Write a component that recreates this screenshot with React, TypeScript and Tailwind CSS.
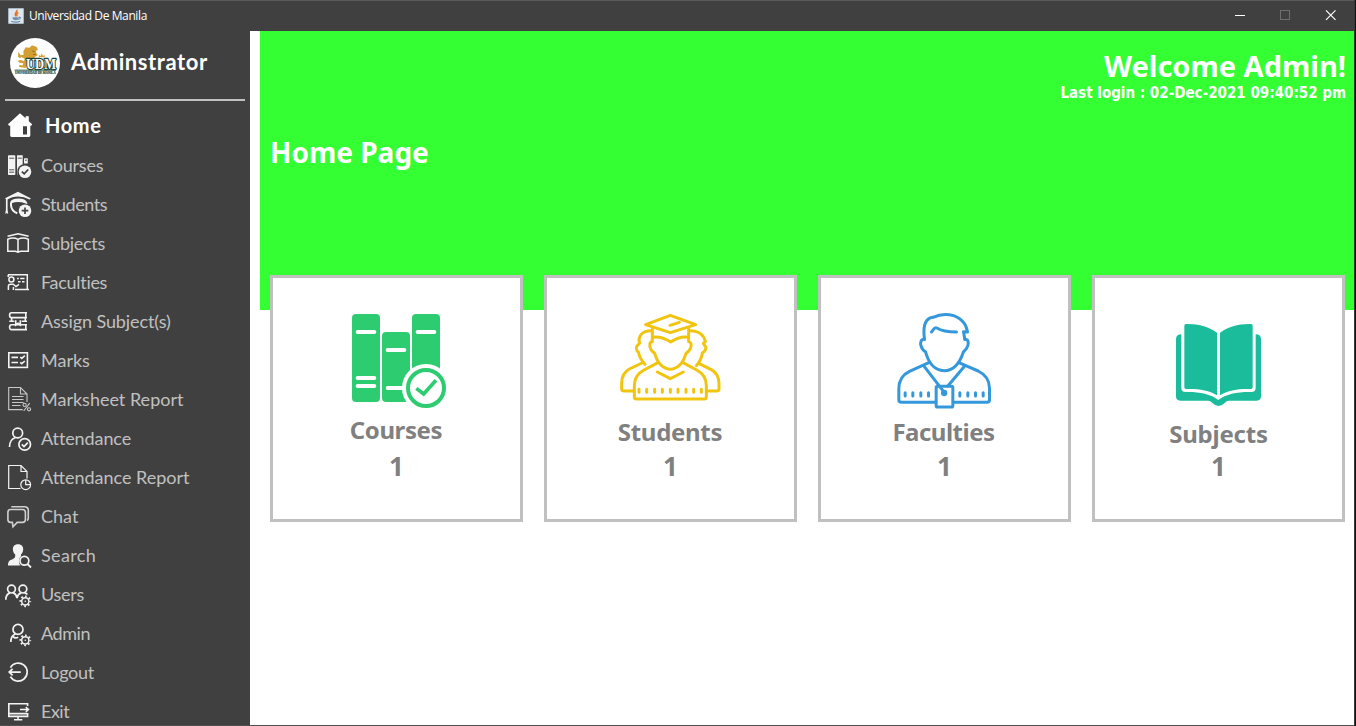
import type { ReactNode } from "react";

function JavaIcon() {
  return (
    <svg width="16" height="16" viewBox="0 0 16 16">
      <rect x="0.3" y="0.3" width="15.4" height="15.4" rx="1" fill="#dfe7ee" stroke="#9db4c6" strokeWidth="0.8" />
      <path d="M8.8 1.8C10 4 5.4 5 7.6 8.4M10.3 4.4C8 5.6 9.4 6.6 8.4 8.4" fill="none" stroke="#e76f1c" strokeWidth="1.5" />
      <path d="M4.4 9.3H10.8C10.6 11.6 9.8 12.2 7.6 12.2S4.9 11.6 4.4 9.3Z" fill="#6b8fb0" />
      <path d="M10.8 9.2C13.6 8.6 13 11 10.3 11.3M3.4 13.4C6 14.4 10 14.4 12.2 13.2" fill="none" stroke="#4f7699" strokeWidth="1" />
    </svg>
  );
}

function SchoolLogo() {
  return (
    <svg className="shrink-0 overflow-visible" width="50" height="50" viewBox="0 0 150 150">
      <circle cx="75" cy="75" r="75" fill="#fff" />
      <path
        d="M40 40L47 28L58 29L66 22L80 27L84 36L78 38L79 46L84 51L76 56L70 62L58 66L52 80L46 90L28 87C24 82 30 78 37 83L40 76L29 74L23 68L31 66L42 69L44 62L34 57L30 61L24 56L25 41L32 52L41 50Z"
        fill="#d2a032"
      />
      <path d="M66 39L74 41M69 49L77 49" fill="none" stroke="#8d6417" strokeWidth="2.5" />
      <path d="M86 58L87 50L92 54L95 46L99 54L104 50V58Z" fill="#d2a032" />
      <text
        x="48" y="93" textLength="90" lengthAdjust="spacingAndGlyphs" fill="#fff" stroke="#1c4536" strokeWidth="7"
        paintOrder="stroke" strokeLinejoin="round" fontSize="46" fontWeight="700" fontFamily="Liberation Serif, serif"
      >
        UDM
      </text>
      <path d="M14 96.5H138" stroke="#24513f" strokeWidth="3" />
      <text
        x="15" y="108" textLength="122" lengthAdjust="spacingAndGlyphs" fill="#1c4536" stroke="#1c4536" strokeWidth="0.6"
        fontSize="12" fontWeight="700" fontFamily="Liberation Serif, serif"
      >
        UNIVERSIDAD DE MANILA
      </text>
    </svg>
  );
}

function Gear() {
  return (
    <g fill="none">
      <circle cx="20.3" cy="20.3" r="3.6" strokeWidth="1.5" />
      <circle cx="20.3" cy="20.3" r="5" strokeWidth="1.8" strokeDasharray="1.7 2.227" strokeDashoffset="0.85" />
      <circle cx="20.3" cy="20.3" r="0.8" fill="#f3f3f3" stroke="none" />
    </g>
  );
}

const homeIcon = (
  <path
    d="M3 12.3L15 1.2L20.6 6.2V4.2H23.8V9.3L27.2 12.3L26.2 13.8H25.3V23.6Q25.3 25 24 25H22V14.3H18V22.5H22V25H6.6Q5.2 25 5.2 23.6V13.8H4Z"
    fill="#fff" stroke="none"
  />
);

type Item = { label: string; text: string; icon: ReactNode };

const items: Item[] = [
  {
    label: "Courses",
    text: "tracking-[-0.2px]",
    icon: (
      <g stroke="none" fill="#f3f3f3">
        <rect x="3" y="3.2" width="7.3" height="19.8" rx="0.8" />
        <path d="M12 3.2H17.7V12.2C14 13.4 12.3 16 12.3 19.5V23H12Z" />
        <rect x="19" y="6.2" width="3.8" height="5.3" rx="0.6" />
        <circle cx="20" cy="19.7" r="6.3" />
        <path d="M4.2 6.2H9.2M4.2 17.8H9.2M4.2 20.2H9.2M12.8 6.2H16.8M20 8.2H21.8" stroke="#404040" strokeWidth="0.9" />
        <path d="M16.9 19.6L19.2 21.8L23.2 17.5" fill="none" stroke="#404040" strokeWidth="1.8" />
      </g>
    ),
  },
  {
    label: "Students",
    text: "tracking-[-0.45px]",
    icon: (
      <g>
        <path d="M0 7.2L13 0.8L26 7.5L24.5 8.6Q19 5.6 13 5.6T2.6 8.6V18.4L3.2 23L1.6 22L0.2 23L0.9 18.4V8Z" fill="#f3f3f3" stroke="none" />
        <path d="M6.3 11.2Q7 8.4 13.5 8.4T21 11.5Q13 8.8 6.3 11.2ZM6 12V14.3Q6.5 20 12.3 22.3" fill="none" strokeWidth="2" />
        <circle cx="20" cy="19.7" r="6.3" fill="#f3f3f3" stroke="none" />
        <path d="M20 16.4V23M16.7 19.7H23.3" stroke="#404040" strokeWidth="1.7" />
      </g>
    ),
  },
  {
    label: "Subjects",
    text: "tracking-[-0.3px]",
    icon: (
      <g fill="none" strokeWidth="1.5">
        <path d="M2.8 9.2Q8.5 6.8 13 9.4Q17.5 6.8 23.3 9.2V21.3H15.5L13 22.3L10.5 21.3H2.8ZM13 9.4V21.3M2.6 6.2L13 3.7L23.6 6.2" />
      </g>
    ),
  },
  {
    label: "Faculties",
    text: "tracking-[-0.3px]",
    icon: (
      <g fill="none" strokeWidth="1.5">
        <path d="M3 5.7H22.3V20.2M3.2 5.7V8M10 20.4H24M12 9.5H13.8M15.2 9.5H19.5M13 12.8H15.5M17 12.8H19.5" />
        <circle cx="6.4" cy="10.6" r="2.5" />
        <path d="M3.4 21V17.2Q3.4 15.2 5.6 15.2H8.2L11 17.6L14 15.3M8.4 18V21" />
      </g>
    ),
  },
  {
    label: "Assign Subject(s)",
    text: "tracking-[-0.1px]",
    icon: (
      <g fill="none" strokeWidth="1.6">
        <path d="M22 4.8H6.5Q4.6 4.8 4.6 7.2T6.5 9.6H22M20.8 4.8V9.6M6.6 9.6V14M20.3 9.6V14M4.3 13.3H9.3M16.7 13.3H22M22 16.8H6.5Q4.6 16.8 4.6 19.2T6.5 21.6H22M20.8 16.8V21.6" />
        <path d="M10.7 12.3V17L13 15.2L15.3 17V12.3" />
      </g>
    ),
  },
  {
    label: "Marks",
    text: "tracking-[0px]",
    icon: (
      <g fill="none" strokeWidth="1.6">
        <rect x="3.8" y="5.8" width="18.6" height="14.6" />
        <path d="M6.5 10.4H13M6.5 15.5H13" />
        <path d="M15.2 10L16.8 11.4L19.8 8.7M15.2 15.3L16.8 16.7L19.8 14" />
      </g>
    ),
  },
  {
    label: "Marksheet Report",
    text: "tracking-[0px]",
    icon: (
      <g fill="none" stroke="#c8c8c8" strokeWidth="1.1">
        <path d="M17.8 23.6H3.7V1.5H15.5L22 8V16M15.5 1.5V8H22M7 10.5H18.5M7 13.5H18.5M7 16.5H18.5M7 19.5H15.5" />
        <path d="M24.7 17.2L18.7 25" />
        <circle cx="19.6" cy="18.9" r="1.6" />
        <circle cx="24" cy="23.3" r="1.6" />
      </g>
    ),
  },
  {
    label: "Attendance",
    text: "tracking-[-0.1px]",
    icon: (
      <g fill="none" strokeWidth="1.7">
        <circle cx="12.7" cy="8" r="4.9" />
        <path d="M4.5 22Q4.5 14.5 10.5 12.5" />
        <circle cx="19.7" cy="19.4" r="5.8" />
        <path d="M16.8 19.3L19 21.5L22.8 17.7" />
      </g>
    ),
  },
  {
    label: "Attendance Report",
    text: "tracking-[0px]",
    icon: (
      <g fill="none" strokeWidth="1.2">
        <path d="M15.5 24.5H3.7V1.5H16L22 7.5V14.5M16 1.5V7.5H22" />
        <circle cx="20.7" cy="20.7" r="4.9" />
        <path d="M20.7 16V20.7H25.3" />
      </g>
    ),
  },
  {
    label: "Chat",
    text: "tracking-[0px]",
    icon: (
      <g fill="none" stroke="#d0d0d0" strokeWidth="1.6">
        <path d="M5.5 6.5H17.5Q20.4 6.5 20.4 9.3V16.6Q20.4 19.4 17.5 19.4H12.2L8 23.8L7.4 19.4H5.5Q2.9 19.4 2.9 16.6V9.3Q2.9 6.5 5.5 6.5Z" />
        <path d="M6.3 3.7H19.5Q23.3 3.7 23.3 7.5V15Q23.3 16.8 22 17.5" />
      </g>
    ),
  },
  {
    label: "Search",
    text: "tracking-[0.35px]",
    icon: (
      <g>
        <path d="M13 2.3C16.5 2.3 18.3 4.5 18.2 7.3C18.1 9.7 17.3 11.3 16 12.5V14.2C13.8 16 13.2 20.5 15.4 23.6H3C3 19.3 4.5 18.3 7.5 17.2C9.8 16.3 10.4 15.6 10.2 12.6C8.7 11.3 7.9 9.6 7.9 7.3C7.8 4.5 9.5 2.3 13 2.3Z" fill="#f3f3f3" stroke="none" />
        <circle cx="19.4" cy="18.7" r="4.4" fill="none" strokeWidth="1.7" />
        <path d="M22.5 22L26 25.5" strokeWidth="1.8" />
      </g>
    ),
  },
  {
    label: "Users",
    text: "tracking-[-0.25px]",
    icon: (
      <g fill="none" strokeWidth="1.7">
        <circle cx="6.5" cy="8.1" r="3.9" />
        <circle cx="17.9" cy="8.1" r="3.9" />
        <path d="M0.8 18.7Q0.8 13.5 4.8 11.9M8.2 11.9Q11.3 13 12 17Q12.8 13 16.2 11.9M19.6 11.9Q21.5 12.4 22.4 13.6" />
        <Gear />
      </g>
    ),
  },
  {
    label: "Admin",
    text: "tracking-[-0.45px]",
    icon: (
      <g fill="none" strokeWidth="1.7">
        <circle cx="13" cy="9.4" r="5" />
        <path d="M5.8 22Q5.8 15.5 10.5 14M8.2 16.6Q10 18.8 13.2 17.2" />
        <Gear />
      </g>
    ),
  },
  {
    label: "Logout",
    text: "tracking-[-0.3px]",
    icon: (
      <g fill="none" strokeWidth="1.7">
        <path d="M5.4 8.6A9 9 0 1 1 5.4 17.6M15.8 13.1H4.2M7.6 9.8L4.2 13.1L7.6 16.4" />
      </g>
    ),
  },
  {
    label: "Exit",
    text: "tracking-[-0.5px]",
    icon: (
      <g fill="none" strokeWidth="1.6">
        <path d="M22.6 8V5.8H3.8V18.4H22.6V15M3.8 15.6H22M13 18V21.2M9 21.8H17.3M15 11.5H23.2M20.8 9.2L23.4 11.5L20.8 13.8" />
      </g>
    ),
  },
];

function MenuIcon({ children }: { children: ReactNode }) {
  return (
    <svg className="shrink-0" width="28" height="28" viewBox="0 0 28 28" stroke="#f3f3f3">
      {children}
    </svg>
  );
}

function Sidebar() {
  return (
    <aside className="flex w-[250px] shrink-0 flex-col overflow-hidden bg-[#404040] font-[Lato,sans-serif]">
      <div className="flex h-[68px] shrink-0 items-start pl-2.5 pt-[7px]">
        <SchoolLogo />
        <span className="ml-[11px] mt-[9px] text-[22px] leading-[30px] font-bold tracking-[0.58px] whitespace-nowrap text-white">
          Adminstrator
        </span>
      </div>
      <div className="mx-[5px] h-0.5 shrink-0 bg-[#c0c0c0]" />
      <nav className="flex flex-col pt-[11px]">
        <div className="flex h-[40px] shrink-0 items-start pl-[5px]">
          <MenuIcon>{homeIcon}</MenuIcon>
          <span className="ml-3 text-[20px] leading-[26px] font-bold tracking-[0.6px] whitespace-nowrap text-white">Home</span>
        </div>
        {items.map((it) => (
          <div key={it.label} className="flex h-[39px] shrink-0 items-start pl-[5px]">
            <MenuIcon>{it.icon}</MenuIcon>
            <span className={"ml-2 text-[18px] leading-[26px] whitespace-nowrap text-[#c0c0c0] " + it.text}>{it.label}</span>
          </div>
        ))}
      </nav>
    </aside>
  );
}

function CoursesArt() {
  return (
    <svg width="101" height="98" viewBox="258 141 303 294" fill="#2ecc71">
      <rect x="276" y="147" width="84" height="264" rx="12" />
      <rect x="366" y="201" width="84" height="210" rx="12" />
      <rect x="456" y="147" width="84" height="240" rx="12" />
      <path d="M293 201H343M293 339H343M293 363H343M383 255H433M383 369H440M473 201H523" stroke="#fff" strokeWidth="12" strokeLinecap="round" />
      <circle cx="498" cy="369" r="72" fill="#fff" />
      <circle cx="498" cy="369" r="54" fill="none" stroke="#2ecc71" strokeWidth="12" />
      <path d="M469 370L491 387L528 346" fill="none" stroke="#2ecc71" strokeWidth="11" />
    </svg>
  );
}

function StudentsArt() {
  return (
    <svg width="104" height="92" viewBox="56 36 312 276" fill="none" stroke="#f1c40f" strokeWidth="9" strokeLinecap="round" strokeLinejoin="round">
      <path d="M136 74L210 46L286 74L210 98Z" />
      <path d="M209 76L237 67" />
      <path d="M156 87V125C147 124 147 137 151 147C154 154 159 156 163 160C169 181 183 205 210 208C237 205 251 181 257 160C262 156 267 153 270 146C275 136 273 127 265 125V87" />
      <path d="M157 112C177 109 192 114 211 126C229 114 246 109 264 112" />
      <path d="M151 92C130 92 117 104 116 121L118 129L110 138C106 144 109 153 115 158C117 173 124 182 134 193M269 92C292 92 311 103 315 125L309 130L317 142C317 151 311 156 306 159C304 176 297 187 288 197" />
      <path d="M173 188L131 210C110 221 102 236 102 257V290Q102 297 109 297H311Q318 297 318 290V257C318 236 310 221 289 210L248 188" />
      <path d="M125 189L87 207C71 216 64 230 64 249V266Q64 273 72 273H98M295 190L333 209C349 218 356 231 356 250V266Q356 273 348 273H322" />
      <path d="M171 216L210 236L249 216" />
      <path d="M116 268V277M139 268V277M163 268V277M186 268V277M210 268V277M233 268V277M257 268V277M280 268V277M303 268V277" />
    </svg>
  );
}

function FacultiesArt() {
  return (
    <svg width="98" height="98" viewBox="62.5 36 294 294" fill="none" stroke="#3498db" strokeWidth="9" strokeLinecap="round" strokeLinejoin="round">
      <path d="M148 118C144 88 145 55 174 52C204 37 244 41 264 66C274 76 275 87 277 96L265 95L269 118" />
      <path d="M148 118C137 117 134 130 138 139C141 148 145 153 151 155C159 186 177 212 207 212C237 212 255 186 265 155C271 151 275 147 278 137C281 126 279 118 269 118" />
      <path d="M169 96C176 88 177 80 185 84C202 95 222 96 244 96" />
      <path d="M161 188L103 214C78 226 71 244 71 266V300Q71 307 79 307H180M251 188L309 213C334 225 343 242 343 265V300Q343 307 335 307H235" />
      <path d="M147 199L205 274M268 199L218 258" />
      <rect x="183" y="259" width="50" height="62" rx="4" />
      <circle cx="207" cy="279" r="5" fill="#3498db" />
      <path d="M90 278V288M113 278V288M137 278V288M160 278V288M254 278V288M278 278V288M301 278V288M324 278V288" />
    </svg>
  );
}

function SubjectsArt() {
  return (
    <svg width="88" height="86" viewBox="72 66 264 258" fill="#1abc9c">
      <path d="M94 103V263Q94 276 107 276C145 275 181 281 205 300C229 281 266 275 304 276Q317 276 317 263V103Q333 103 333 118V289Q333 302 320 302H237Q229 302 224 309Q206 327 187 309Q182 302 174 302H91Q78 302 78 289V118Q78 103 94 103Z" />
      <path d="M103 77Q103 72 108 72C145 71 177 80 201 98V286C176 270 146 266 108 267Q103 267 103 262ZM308 77Q308 72 303 72C266 71 234 80 210 98V286C235 270 265 266 303 267Q308 267 308 262Z" />
    </svg>
  );
}

const cards = [
  { title: "Courses", count: 1, art: <CoursesArt />, gap: "h-[102px]", cls: "tracking-[-0.4px] pr-px" },
  { title: "Students", count: 1, art: <StudentsArt />, gap: "h-[104px]", cls: "tracking-[-0.3px] pr-px" },
  { title: "Faculties", count: 1, art: <FacultiesArt />, gap: "h-[104px]", cls: "tracking-[-0.5px] pr-0.5" },
  { title: "Subjects", count: 1, art: <SubjectsArt />, gap: "h-[106px] pt-2.5", cls: "tracking-[-0.2px]" },
];

function TitleBar() {
  return (
    <header className="flex h-[31px] shrink-0 items-center border-t border-[#5a5a5a] bg-[#404040] pl-2 font-['Open_Sans',sans-serif]">
      <JavaIcon />
      <span className="ml-[5px] grow text-[12px] leading-4 tracking-[-0.39px] text-white">Universidad De Manila</span>
      <svg width="120" height="30" viewBox="1234 1 120 30" fill="none" strokeWidth="1">
        <path d="M1235 15.5H1245" stroke="#fff" />
        <rect x="1280.5" y="10.5" width="9" height="9" stroke="#6e6e6e" />
        <path d="M1326 10.3L1335.5 19.8M1335.5 10.3L1326 19.8" stroke="#fff" strokeWidth="1.2" />
      </svg>
    </header>
  );
}

export default function App() {
  return (
    <div className="flex h-[726px] w-[1356px] overflow-hidden bg-[#111]">
      <div className="flex w-[1354px] flex-col border-b border-[#505050] bg-white">
        <TitleBar />
        <div className="flex min-h-0 grow">
          <Sidebar />
          <main className="ml-2.5 flex w-[1094px] flex-col font-['Noto_Sans',sans-serif] font-bold">
            <section className="flex h-[279px] shrink-0 flex-col bg-[#33ff33] text-white">
              <div className="flex flex-col items-end pr-2 pt-[15px]">
                <h1 className="text-[29px] leading-10 whitespace-nowrap">Welcome Admin!</h1>
                <p className="font-['DejaVu_Sans_Condensed','DejaVu_Sans',sans-serif] text-[15px] leading-[15px] whitespace-nowrap">
                  Last login : 02-Dec-2021 09:40:52 pm
                </p>
              </div>
              <h2 className="mt-[31px] pl-2.5 text-[28px] leading-10 whitespace-nowrap">Home Page</h2>
            </section>
            <section className="-mt-[35px] flex gap-[21px] pl-2.5">
              {cards.map((c) => (
                <article key={c.title} className="flex h-[247px] w-[253px] flex-col items-center border-[3px] border-[#c0c0c0] bg-white pt-[34px] text-[#808080]">
                  <div className="flex h-[138px] flex-col items-center">
                    <div className={"shrink-0 " + c.gap}>{c.art}</div>
                    <h3 className={"text-[24px] leading-8 whitespace-nowrap " + c.cls}>{c.title}</h3>
                  </div>
                  <p className="text-[26px] leading-8">{c.count}</p>
                </article>
              ))}
            </section>
          </main>
        </div>
      </div>
      <div className="w-px bg-[#3a3a3a]" />
    </div>
  );
}
